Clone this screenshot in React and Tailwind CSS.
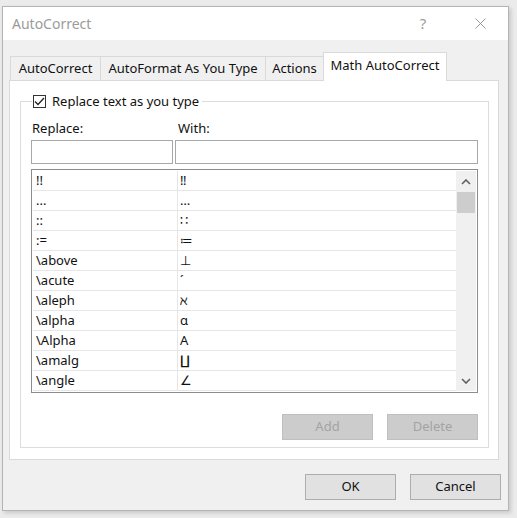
import { X } from 'lucide-react'

const ROWS = [
  ['!!', '\u203C'],
  ['...', '\u2026'],
  ['::', '\u2237'],
  [':=', '\u2254'],
  ['\\above', '\u22A5'],
  ['\\acute', '\u00B4'],
  ['\\aleph', '\u2135'],
  ['\\alpha', '\u03B1'],
  ['\\Alpha', '\u0391'],
  ['\\amalg', '\u2210'],
  ['\\angle', '\u2220'],
]

const TABS = [
  { label: 'AutoCorrect', w: 'w-[90px]' },
  { label: 'AutoFormat As You Type', w: 'w-[165px]' },
  { label: 'Actions', w: 'w-[58px]' },
]

function Chevron({ up }) {
  return (
    <svg width="10" height="6" viewBox="0 0 10 6" className="text-[#606060]">
      <path d={up ? 'M1 5 L5 1 L9 5' : 'M1 1 L5 5 L9 1'} fill="none" stroke="currentColor" strokeWidth="1.6" />
    </svg>
  )
}

export default function App() {
  return (
    <div className="w-[517px] h-[518px] bg-[#ebebeb] pt-[6px] pl-[2px] font-['Noto_Sans','DejaVu_Sans',sans-serif] text-[13px] text-[#111]">
      <div className="w-[507px] h-[505px] border border-[#b4b4b4] bg-[#f0f0f0] flex flex-col shadow-[2px_2px_4px_rgba(0,0,0,0.15)]">
        {/* Title bar */}
        <div className="h-[33px] bg-white flex items-center pl-[9px] shrink-0">
          <span className="text-[14px] text-[#9b9b9b] flex-1">AutoCorrect</span>
          <span className="text-[15px] text-[#9b9b9b] w-[20px] text-center mr-[38px]">?</span>
          <X size={19} strokeWidth={1.1} className="text-[#8a8a8a] mr-[18px]" />
        </div>

        {/* Tabs */}
        <div className="flex items-end pl-[7px] mt-[12px] h-[28px] relative z-10">
          {TABS.map(t => (
            <div
              key={t.label}
              className={`${t.w} h-[24px] border border-b-0 border-r-0 last:border-r border-[#d9d9d9] bg-[#f0f0f0] flex items-center justify-center`}
            >
              {t.label}
            </div>
          ))}
          <div className="w-[124px] h-[29px] -mb-[1px] border border-b-0 border-[#d9d9d9] bg-white flex items-start justify-center pt-[3px]">
            Math AutoCorrect
          </div>
        </div>

        {/* Tab panel */}
        <div className="ml-[6px] w-[490px] h-[380px] border border-[#d9d9d9] bg-white pt-[20px] pl-[10px] pr-[9px] pb-[11px]">
          <div className="relative h-full border border-[#dcdcdc] px-[10px] pt-[18px] flex flex-col">
            <div className="absolute -top-[9px] left-[11px] bg-white flex items-center gap-[6px] pr-[3px] pl-[1px]">
              <div className="w-[13px] h-[13px] border border-[#333] flex items-center justify-center">
                <svg width="11" height="9" viewBox="0 0 11 9">
                  <path d="M1 4.5 L4 7.5 L10 1" fill="none" stroke="#222" strokeWidth="1.3" />
                </svg>
              </div>
              <span className="leading-[16px]">Replace text as you type</span>
            </div>

            <div className="flex h-[16px] leading-[16px]">
              <span className="w-[147px] pl-[1px]">Replace:</span>
              <span>With:</span>
            </div>
            <div className="flex gap-[2px] mt-[4px]">
              <div className="w-[142px] h-[24px] border border-[#a8a8a8] bg-white" />
              <div className="flex-1 h-[24px] border border-[#a8a8a8] bg-white" />
            </div>

            {/* List */}
            <div className="mt-[5px] h-[224px] border border-[#8c8c8c] bg-white flex p-[1px]">
              <div className="flex-1 flex flex-col">
                {ROWS.map(([a, b]) => (
                  <div key={a} className="h-[20px] flex border-b border-[#e6e6e6] leading-[19px]">
                    <div className="w-[145px] pl-[3px] border-r border-[#e6e6e6]">{a}</div>
                    <div className="pl-[2px]">{b}</div>
                  </div>
                ))}
              </div>
              <div className="w-[20px] bg-[#f0f0f0] flex flex-col items-center">
                <div className="h-[21px] flex items-center justify-center">
                  <Chevron up />
                </div>
                <div className="w-[18px] h-[21px] bg-[#cdcdcd]" />
                <div className="flex-1" />
                <div className="h-[21px] flex items-center justify-center">
                  <Chevron />
                </div>
              </div>
            </div>

            <div className="flex justify-end gap-[14px] mt-[21px]">
              <div className="w-[91px] h-[26px] bg-[#cccccc] border border-[#bfbfbf] text-[#a3a3a3] flex items-center justify-center">Add</div>
              <div className="w-[91px] h-[26px] bg-[#cccccc] border border-[#bfbfbf] text-[#a3a3a3] flex items-center justify-center">Delete</div>
            </div>
          </div>
        </div>

        {/* Footer */}
        <div className="flex justify-end gap-[14px] mt-[14px] pr-[7px]">
          <div className="w-[91px] h-[26px] bg-[#e1e1e1] border border-[#adadad] flex items-center justify-center">OK</div>
          <div className="w-[91px] h-[26px] bg-[#e1e1e1] border border-[#adadad] flex items-center justify-center">Cancel</div>
        </div>
      </div>
    </div>
  )
}
